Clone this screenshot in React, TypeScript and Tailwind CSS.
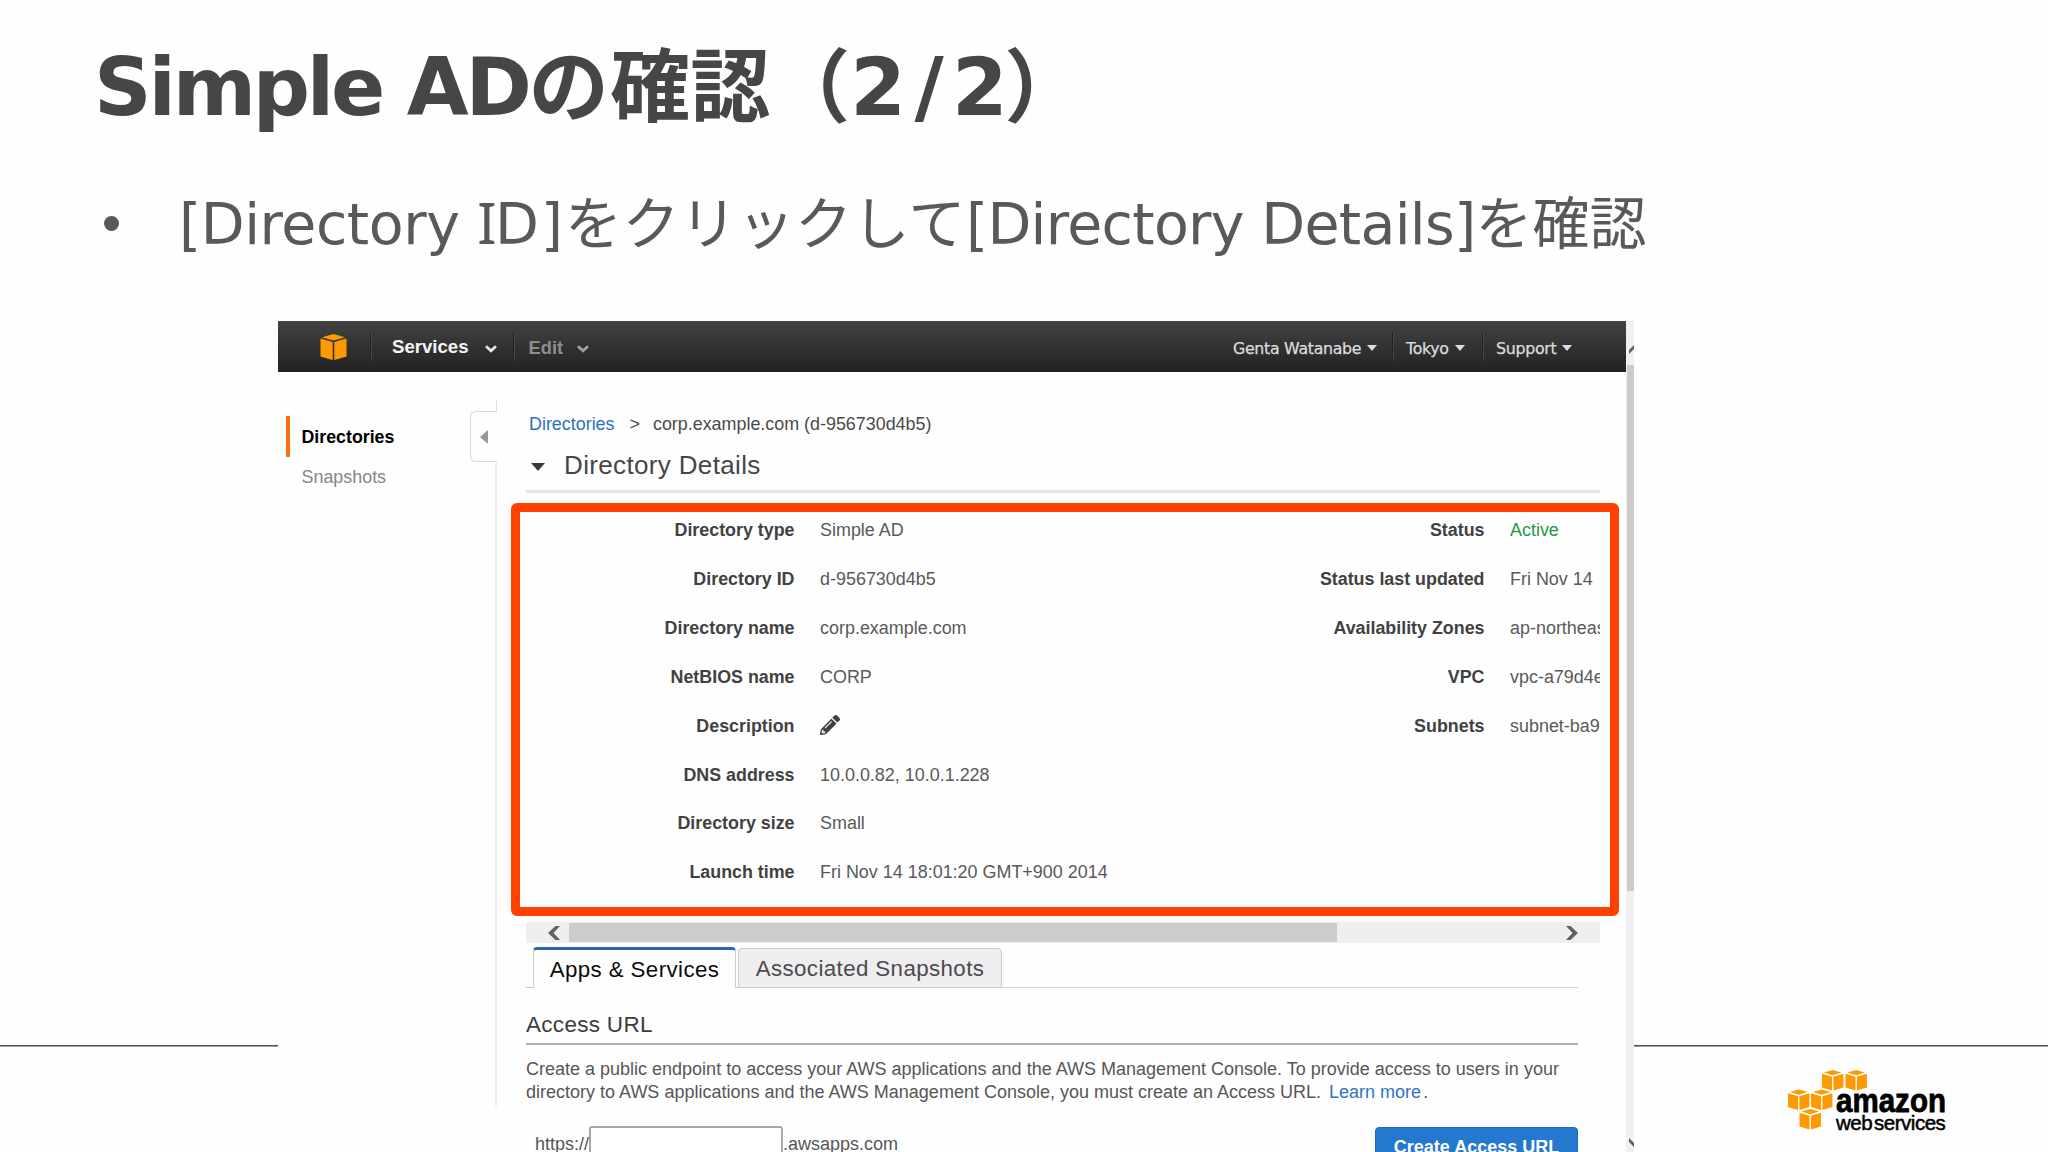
import type { ReactNode } from "react";
import { FaPencilAlt } from "react-icons/fa";

const leftDetails: { label: string; value: ReactNode }[] = [
  { label: "Directory type", value: "Simple AD" },
  { label: "Directory ID", value: "d-956730d4b5" },
  { label: "Directory name", value: "corp.example.com" },
  { label: "NetBIOS name", value: "CORP" },
  { label: "Description", value: <FaPencilAlt className="-mt-[2px] w-5 h-5 text-[#3f3f41]" /> },
  { label: "DNS address", value: "10.0.0.82, 10.0.1.228" },
  { label: "Directory size", value: "Small" },
  { label: "Launch time", value: "Fri Nov 14 18:01:20 GMT+900 2014" },
];

const rightDetails: { label: string; value: ReactNode }[] = [
  { label: "Status", value: <span className="text-[#1f9a3f]">Active</span> },
  { label: "Status last updated", value: "Fri Nov 14" },
  { label: "Availability Zones", value: "ap-northeas" },
  { label: "VPC", value: "vpc-a79d4e" },
  { label: "Subnets", value: "subnet-ba9" },
];

const accountMenu = [
  { label: "Genta Watanabe", className: "w-[159px] pl-0" },
  { label: "Tokyo", className: "w-[88px] pl-3" },
  { label: "Support", className: "w-[142px] pl-3" },
];

function Cube({ className }: { className: string }) {
  return (
    <svg viewBox="0 0 26 26" className={className} fill="#ff9900">
      <path d="M13 0 L24.5 3.2 L13 6.6 L1.5 3.2 Z" />
      <path d="M0 4.6 L12.2 8 V26 L0 22.4 Z" />
      <path d="M26 4.6 L13.8 8 V26 L26 22.4 Z" />
    </svg>
  );
}

function Chevron({ className }: { className: string }) {
  return (
    <svg viewBox="0 0 12 8" className={className} fill="none" stroke="currentColor" strokeWidth="2.8">
      <path d="M1 1.2 L6 5.8 L11 1.2" />
    </svg>
  );
}

function Divider() {
  return <div className="w-[2px] h-7 shrink-0 bg-[#222] border-r border-[#484848]" />;
}

function DetailRow({ label, value }: { label: string; value: ReactNode }) {
  return (
    <div className="flex h-6 leading-6">
      <dt className="w-[274.5px] shrink-0 text-right text-[17.85px] font-bold text-[#414143]">{label}</dt>
      <dd className="ml-[25.5px] flex items-center overflow-hidden whitespace-nowrap">{value}</dd>
    </div>
  );
}

function NavBar() {
  return (
    <div className="h-[51px] shrink-0 flex items-center bg-gradient-to-b from-[#434343] to-[#232223]">
      <Cube className="ml-[42px] w-[27px] h-[26px]" />
      <div className="ml-[23px] flex items-center">
        <Divider />
        <span className="ml-5 text-[18.6px] font-bold text-[#f4f4f4]">Services</span>
        <Chevron className="ml-4 mt-1 w-3 h-2 text-[#e6e6e6]" />
      </div>
      <div className="ml-4 flex items-center">
        <Divider />
        <span className="ml-[14px] mt-[3px] text-[18.3px] font-bold text-[#8d8d8d]">Edit</span>
        <Chevron className="ml-[14px] mt-1 w-3 h-2 text-[#a0a0a0]" />
      </div>
      <div className="ml-auto flex items-center font-['DejaVu_Sans'] text-[15.8px] tracking-[-0.3px] text-[#dcdcdc] [-webkit-text-stroke:0.25px_#dcdcdc]">
        {accountMenu.map((item, index) => (
          <div key={item.label} className="flex items-center">
            {index > 0 && <Divider />}
            <div className={`flex items-center shrink-0 whitespace-nowrap ${item.className}`}>
              <span className="mt-[5px]">{item.label}</span>
              <svg viewBox="0 0 10 6" className="ml-[6px] mt-[3px] w-[10px] h-[6px]" fill="currentColor">
                <path d="M0 0 H10 L5 6 Z" />
              </svg>
            </div>
          </div>
        ))}
      </div>
    </div>
  );
}

function Sidebar() {
  return (
    <div className="flex shrink-0">
      <div className="w-[192px] pt-11 pl-2 text-[17.9px]">
        <div className="h-[41px] leading-[42px] pl-[11.5px] border-l-4 border-[#ff6f0f] font-bold text-[17.8px] text-black">
          Directories
        </div>
        <div className="h-[41px] leading-[41px] pl-[15.5px] text-[#868686]">Snapshots</div>
      </div>
      <div className="w-[27px] pt-7 flex flex-col">
        <div className="h-[11px] border-r border-[#e2e0e6]" />
        <div className="h-[51px] flex items-center justify-center rounded-l-md border border-r-0 border-[#d9d8dd]">
          <svg viewBox="0 0 8 14" className="w-2 h-[14px]" fill="#98989b">
            <path d="M8 0 V14 L0 7 Z" />
          </svg>
        </div>
        <div className="h-[645px] border-r-2 border-[#f1eff5]" />
      </div>
    </div>
  );
}

function DirectoryDetails() {
  return (
    <>
      <div className="h-6 leading-6 pl-[3px] flex text-[17.9px] text-[#4a4a4c]">
        <span className="text-[#2a70c2]">Directories</span>
        <span className="ml-[15px]">&gt;</span>
        <span className="ml-[13px]">corp.example.com (d-956730d4b5)</span>
      </div>
      <div className="mt-[13px] h-8 leading-[33px] pl-[5px] flex items-center">
        <svg viewBox="0 0 14 8" className="mt-[3px] w-[14px] h-2" fill="#3a3a3c">
          <path d="M0 0 H14 L7 8 Z" />
        </svg>
        <h2 className="ml-[19px] text-[26px] tracking-[0.35px] text-[#464648]">Directory Details</h2>
      </div>
      <div className="mt-[9px] w-[1074px] h-[3px] shrink-0 bg-[#e5e4e8]" />
      <div className="mt-[10px] -ml-[15px] w-[1108px] h-[413px] shrink-0 rounded-[6px] border-[9px] border-[#ff4000] flex pt-[6.4px] text-[17.95px] text-[#59595b]">
        <dl className="w-[690px] shrink-0 flex flex-col gap-[24.85px]">
          {leftDetails.map((item) => (
            <DetailRow key={item.label} {...item} />
          ))}
        </dl>
        <dl className="w-[390px] shrink-0 flex flex-col gap-[24.85px]">
          {rightDetails.map((item) => (
            <DetailRow key={item.label} {...item} />
          ))}
        </dl>
      </div>
      <div className="mt-[6px] w-[1074px] h-[21px] shrink-0 flex items-center bg-[#f0eef1] text-[#606060]">
        <svg viewBox="0 0 12 14" className="ml-[22px] w-3 h-[14px]" fill="currentColor">
          <path d="M7.5 0 H12 L5.5 7 L12 14 H7.5 L0 7 Z" />
        </svg>
        <div className="ml-[9px] w-[768px] h-[19px] bg-[#cdcbce]" />
        <svg viewBox="0 0 12 14" className="ml-[229px] w-3 h-[14px]" fill="currentColor">
          <path d="M4.5 0 H0 L6.5 7 L0 14 H4.5 L12 7 Z" />
        </svg>
      </div>
    </>
  );
}

function AccessPanel() {
  return (
    <div className="w-[1052px]">
      <div className="mt-1 h-[41px] flex text-[22.3px] leading-[39px]">
        <div className="w-[7px] border-b border-[#c9c9cb]" />
        <div className="w-[203px] rounded-t-[4px] border-x border-t-[3px] border-x-[#cfced1] border-t-[#2a66b4] text-center tracking-[0.4px] text-[#0c0c0c]">
          Apps &amp; Services
        </div>
        <div className="w-[2px] border-b border-[#c9c9cb]" />
        <div className="mt-[1px] w-[264px] rounded-t-[4px] border border-[#cccbcf] bg-[#efedf0] text-center leading-[40px] tracking-[0.4px] text-[#4b4b4d]">
          Associated Snapshots
        </div>
        <div className="flex-1 border-b border-[#d2d2d4]" />
      </div>
      <h3 className="mt-[21px] h-8 leading-8 text-[22.5px] tracking-[0.3px] text-[#3c3c3e]">Access URL</h3>
      <div className="mt-[2px] h-[2px] bg-[#b1b1b4]" />
      <p className="mt-[13px] text-[18px] leading-[23px] whitespace-nowrap text-[#565658]">
        Create a public endpoint to access your AWS applications and the AWS Management Console. To provide access to users in your
        <br />
        directory to AWS applications and the AWS Management Console, you must create an Access URL.{" "}
        <span className="ml-[3px] text-[#2f74c0]">Learn more</span>
        <span className="ml-[2px]">.</span>
      </p>
      <div className="mt-[22px] flex text-[18px] leading-[36px] text-[#565658]">
        <span className="ml-[9px] w-[54px]">https://</span>
        <div className="w-[194px] h-[35px] rounded-[3px] border-2 border-[#a7a7aa] bg-white" />
        <span>.awsapps.com</span>
        <div className="ml-auto mt-[1px] w-[203px] h-[38px] leading-[38px] rounded-[4px] border border-[#1d69b7] bg-[#2478cf] text-center font-bold text-white">
          Create Access URL
        </div>
      </div>
    </div>
  );
}

function ConsoleWindow() {
  return (
    <div className="w-[1356px] h-[831px] shrink-0 flex overflow-hidden font-['Liberation_Sans',Arial,sans-serif]">
      <div className="w-[1348px] flex flex-col">
        <NavBar />
        <div className="h-[780px] flex overflow-hidden">
          <Sidebar />
          <div className="flex-1 min-w-0 pt-10 pl-[29px] flex flex-col">
            <DirectoryDetails />
            <AccessPanel />
          </div>
        </div>
      </div>
      <div className="w-2 flex flex-col items-end overflow-hidden bg-[#f0eff1]">
        <div className="w-2 h-11 pt-6 pl-[3px]">
          <svg viewBox="0 0 5 9" className="w-[5px] h-[9px]" fill="#606060">
            <path d="M5 0 V4 L0 9 V5 Z" />
          </svg>
        </div>
        <div className="w-[7px] h-[526px] bg-[#cdcbce]" />
        <svg viewBox="0 0 5 9" className="mt-[247px] w-[5px] h-[9px]" fill="#606060">
          <path d="M5 9 V5 L0 0 V4 Z" />
        </svg>
      </div>
    </div>
  );
}

function AwsLogo() {
  return (
    <div className="flex">
      <svg viewBox="0 0 80 61" className="w-20 h-[61px] shrink-0" fill="#ff9900">
        {[
          [34, 0],
          [57.5, 0],
          [0, 19.5],
          [23, 19.5],
          [11.5, 39],
        ].map(([x, y]) => (
          <g key={`${x}-${y}`} transform={`translate(${x} ${y})`}>
            <path d="M10.7 0 L19.5 2.6 L10.7 5.2 L1.9 2.6 Z" />
            <path d="M0 3.8 L10 6.8 V20.6 L0 17.6 Z" />
            <path d="M21.4 3.8 L11.4 6.8 V20.6 L21.4 17.6 Z" />
          </g>
        ))}
      </svg>
      <div className="-ml-[32px] pt-[18px] font-['Liberation_Sans',Arial,sans-serif] text-black">
        <div className="origin-left scale-x-[0.895] w-[124px] h-[28px] leading-[26px] text-[33px] font-bold [-webkit-text-stroke:0.8px_black]">
          amazon
        </div>
        <div className="flex gap-[2px] leading-[14px] text-[20.5px] tracking-[-0.5px] [-webkit-text-stroke:0.5px_black]">
          <span>web</span>
          <span>services</span>
        </div>
      </div>
    </div>
  );
}

export default function App() {
  return (
    <div className="w-[2048px] h-[1152px] overflow-hidden bg-[#fefefe] flex flex-col">
      <h1 className="mt-10 pl-[94px] h-24 leading-[96px] text-[80px] font-bold whitespace-nowrap text-[#464646] font-['DejaVu_Sans','Noto_Sans_CJK_JP',sans-serif]">
        <span className="tracking-[-3.2px]">Simple AD</span>
        <span className="tracking-[1.5px]">の</span>確認（<span className="tracking-[8.5px]">2/</span>
        <span className="tracking-[-3.5px]">2</span>）
      </h1>
      <div className="mt-[51px] h-[72px] pl-[104px] flex items-center leading-[72px] text-[57px] whitespace-nowrap text-[#595959] font-['DejaVu_Sans','Noto_Sans_CJK_JP',sans-serif]">
        <div className="w-[15px] h-[15px] rounded-full bg-[#595959]" />
        <p className="ml-[60px]">
          <span className="tracking-[-0.45px]">[Directory </span>
          <span className="font-['Noto_Sans'] tracking-[-1.5px]">I</span>
          <span className="tracking-[2px]">D]</span>
          <span className="tracking-[0.5px]">をクリックして</span>
          <span className="tracking-[-0.7px]">[Directory Details]</span>を確認
        </p>
      </div>
      <div className="mt-[62px] flex">
        <div className="w-[278px] shrink-0 pt-[724px]">
          <div className="h-[2px] border-b border-[#a0a0a0] bg-[#505050]" />
        </div>
        <ConsoleWindow />
        <div className="flex-1 pt-[724px]">
          <div className="h-[2px] border-b border-[#a0a0a0] bg-[#505050]" />
          <div className="pt-[23px] pl-[154px]">
            <AwsLogo />
          </div>
        </div>
      </div>
    </div>
  );
}
